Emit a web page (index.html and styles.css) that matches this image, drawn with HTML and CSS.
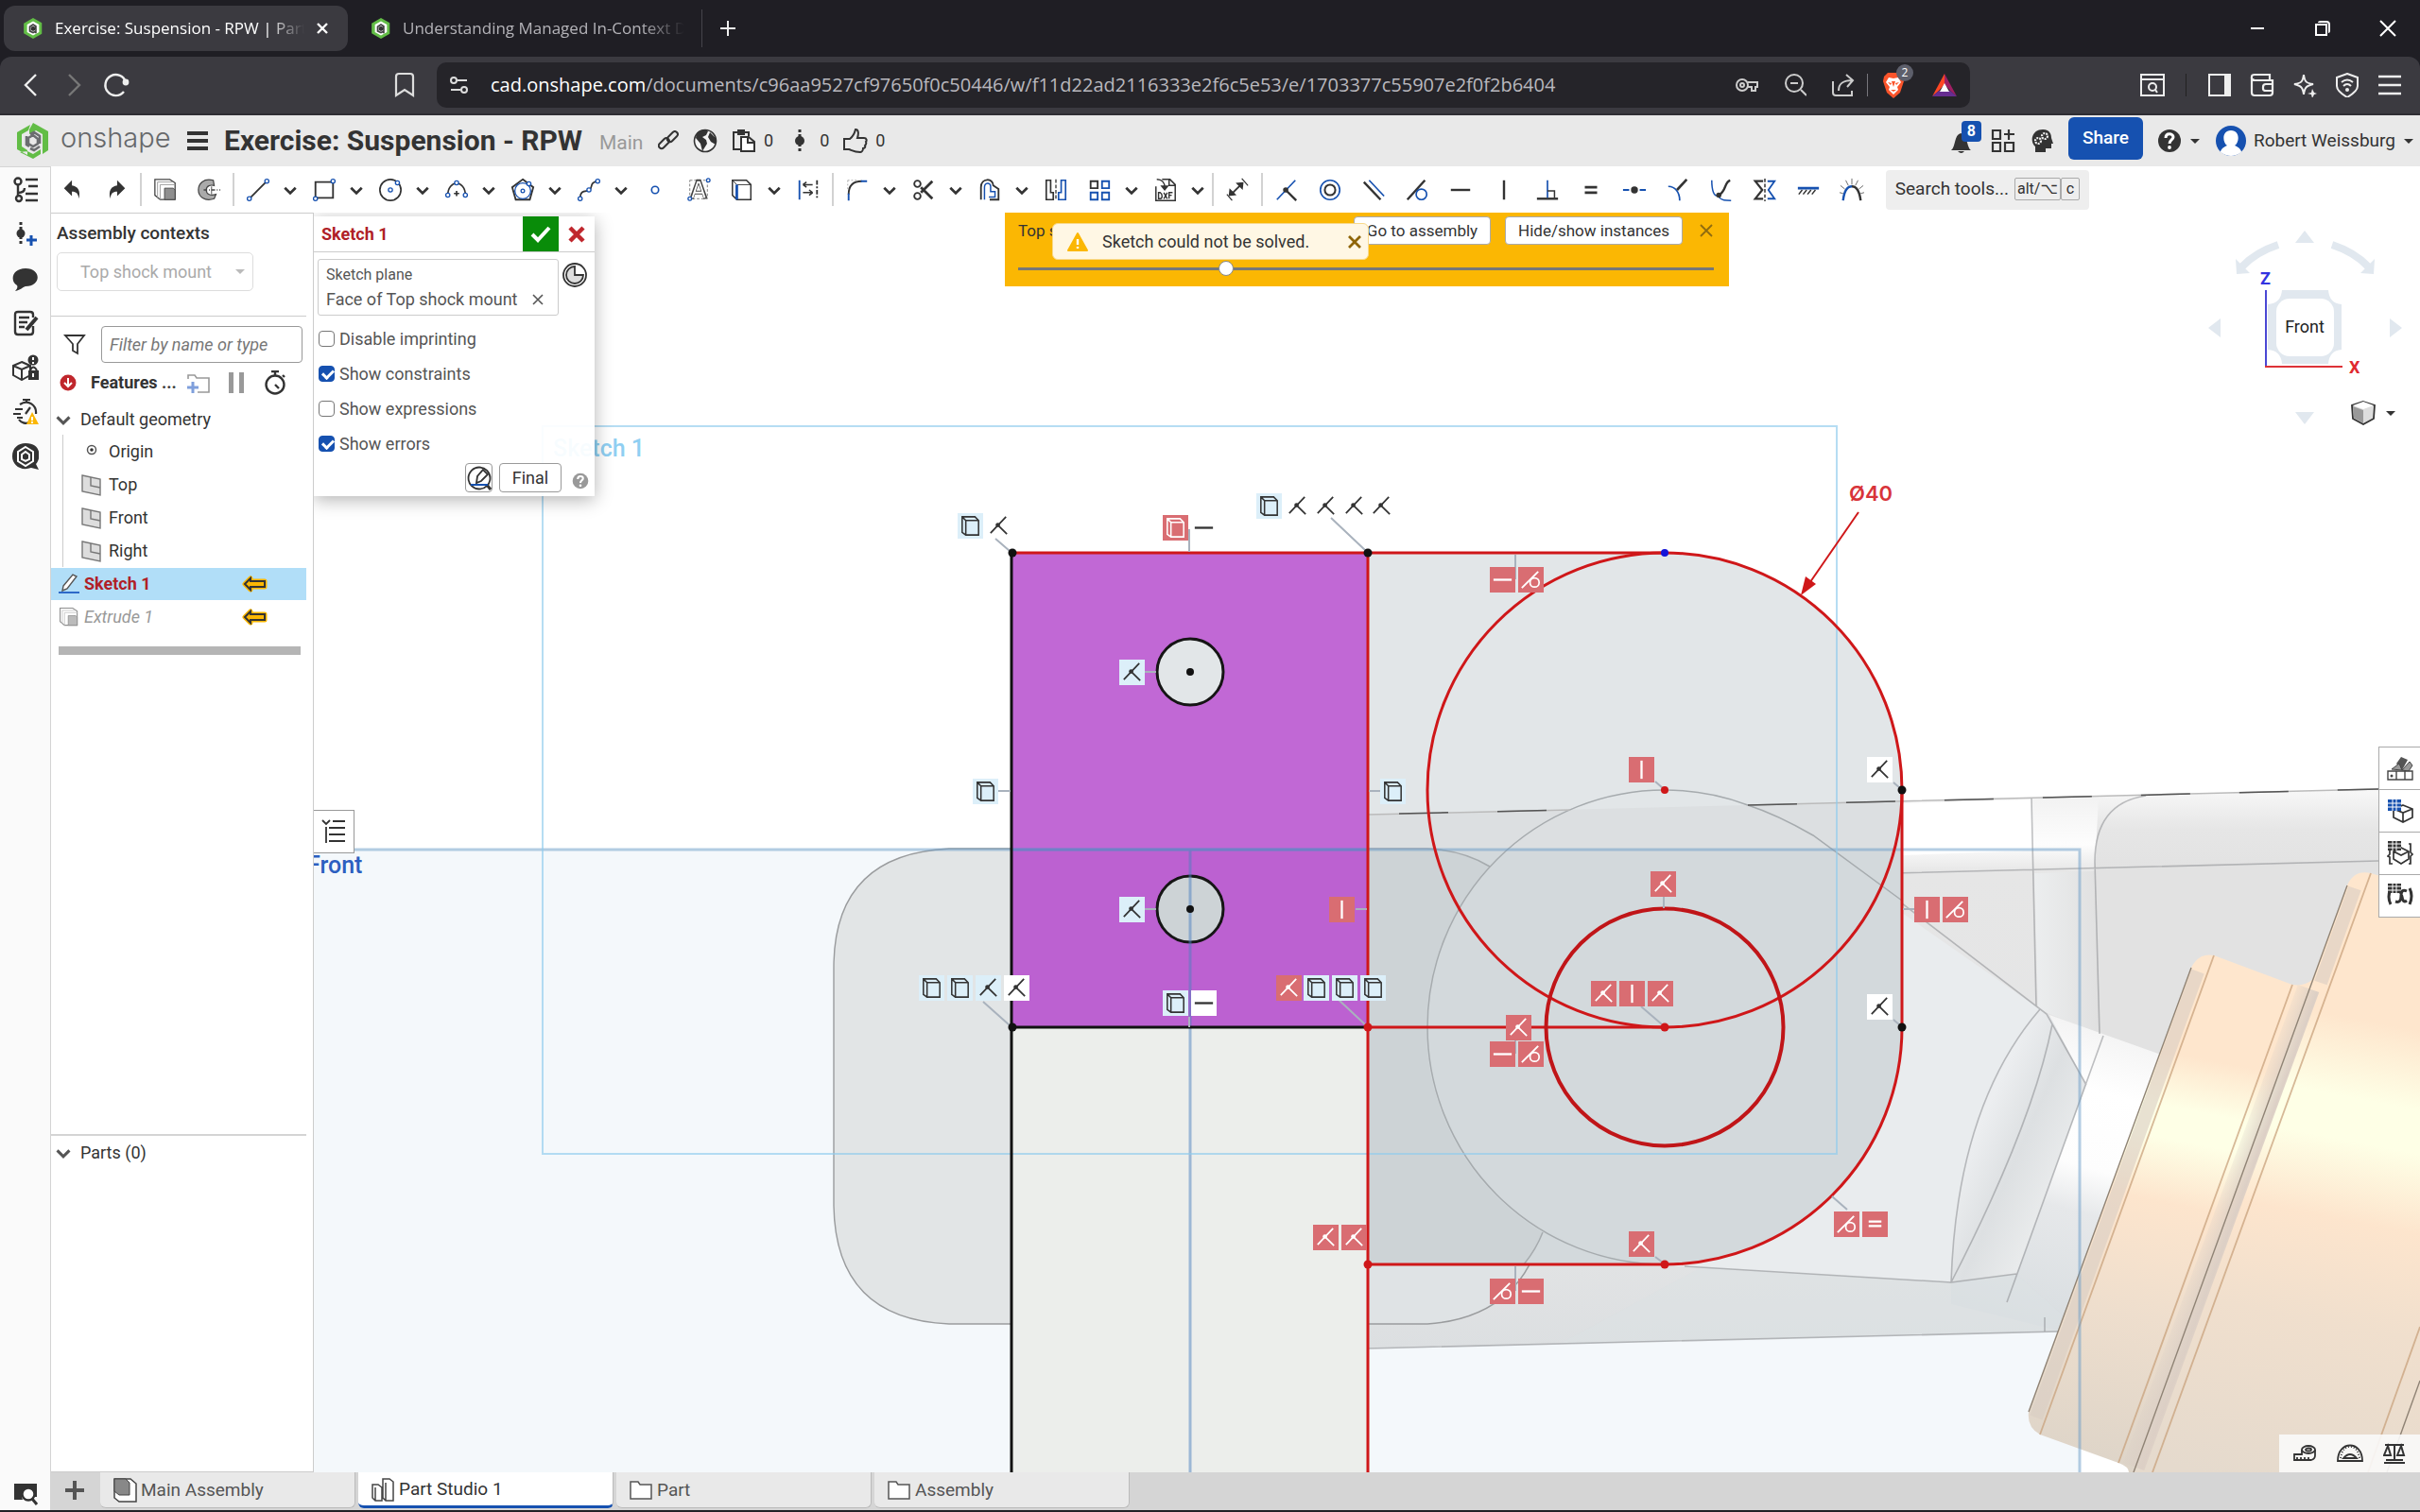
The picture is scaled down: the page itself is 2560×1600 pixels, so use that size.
FILE: index.html
```html
<!DOCTYPE html>
<html lang="en">
<head>
<meta charset="utf-8">
<title>Exercise: Suspension - RPW | Part Studio 1</title>
<link rel="stylesheet" href="styles.css">
</head>
<body>
<svg class="sprite" aria-hidden="true">
<defs>
<linearGradient id="g-steel" x1="0" y1="0" x2="0" y2="1"><stop offset="0" stop-color="#f0f0f0"/><stop offset=".1" stop-color="#fdfdfd"/><stop offset=".15" stop-color="#e6e6e6"/><stop offset=".8" stop-color="#e3e4e5"/><stop offset="1" stop-color="#dcdfe1"/></linearGradient>
<linearGradient id="g-arm" x1="0" y1="0" x2="0" y2="1"><stop offset="0" stop-color="#f8f8f8"/><stop offset=".5" stop-color="#e6e6e6"/><stop offset="1" stop-color="#e2e2e2"/></linearGradient>
<linearGradient id="g-neck" gradientUnits="userSpaceOnUse" x1="2225" y1="1090" x2="2140" y2="1400"><stop offset="0" stop-color="#f4f4f4"/><stop offset=".2" stop-color="#fff"/><stop offset=".45" stop-color="#fdfdfd"/><stop offset=".6" stop-color="#e6e8ea"/><stop offset="1" stop-color="#d8dde0"/></linearGradient>
<linearGradient id="g-fillet" gradientUnits="userSpaceOnUse" x1="2090" y1="1200" x2="2180" y2="1240"><stop offset="0" stop-color="#eceef0"/><stop offset=".5" stop-color="#dde0e2"/><stop offset="1" stop-color="#e9ebec"/></linearGradient>
<linearGradient id="g-coil" gradientUnits="userSpaceOnUse" x1="2470" y1="930" x2="2350" y2="1560"><stop offset="0" stop-color="#fee6cd"/><stop offset=".22" stop-color="#fee6cd"/><stop offset=".35" stop-color="#feffe6"/><stop offset=".42" stop-color="#feffe6"/><stop offset=".55" stop-color="#fde5cd"/><stop offset=".72" stop-color="#f0dfcd"/><stop offset="1" stop-color="#e5dacd"/></linearGradient>
<linearGradient id="g-coil-s" gradientUnits="userSpaceOnUse" x1="2350" y1="1010" x2="2240" y2="1560"><stop offset="0" stop-color="#fee6cd"/><stop offset=".2" stop-color="#fee6cd"/><stop offset=".3" stop-color="#feffe6"/><stop offset=".36" stop-color="#feffe6"/><stop offset=".48" stop-color="#fde5cd"/><stop offset=".7" stop-color="#eedecd"/><stop offset="1" stop-color="#ddd4c8"/></linearGradient>
<linearGradient id="g-shade" gradientUnits="userSpaceOnUse" x1="2334" y1="1287" x2="2372" y2="1301"><stop offset="0" stop-color="#d9cfc6" stop-opacity="0"/><stop offset=".7" stop-color="#dccfc5"/><stop offset="1" stop-color="#dccfc5" stop-opacity=".3"/></linearGradient>
<linearGradient id="g-wall" x1="0" y1="0" x2="1" y2="0"><stop offset="0" stop-color="#eceeef"/><stop offset="1" stop-color="#e0e0e0"/></linearGradient>
</defs>

<symbol id="os-logo" viewBox="0 0 34 38"><path fill="#62bd46" d="M17 0 33 9v20l-6 4V12L20 8l-7 4V7zM0 10l14-8-2 6-7 4v13l6 4v5L0 28zM3 31l14 7 8-5v-5l-8 5-6-3z"/><path fill="none" stroke="#6b6d70" stroke-width="2.6" d="M24 22v-8l-6-4-4 2M10 14v9l3 2m11 0-6 4-4-2M22 17v5l-5 3-5-3v-6l5-3z"/></symbol>
<symbol id="fav" viewBox="0 0 34 38"><path fill="#62bd46" d="M17 0 33 9v20l-16 9L0 28V10z"/><path fill="#fff" d="M17 6 28 12v14l-11 6-11-6V12z"/><path fill="none" stroke="#444" stroke-width="3" d="M22 28v-4l-5 3-6-3v-8l6-4 5 3v7"/><path fill="#333" d="m17 15 4 2v5l-4 2-4-2v-5z"/></symbol>
<symbol id="chev" viewBox="0 0 14 14"><path d="m2 5 5 5 5-5" fill="none" stroke="currentColor" stroke-width="2.4"/></symbol>
<symbol id="caret" viewBox="0 0 14 14"><path d="M2 5h10l-5 5z" fill="currentColor"/></symbol>

<symbol id="undo" viewBox="0 0 28 28"><path fill="currentColor" d="M4 12 13 3v6c7 1 10 6 8 15-1-6-3-8-8-8v5z"/></symbol>
<symbol id="redo" viewBox="0 0 28 28"><path fill="currentColor" d="M24 12 15 3v6c-7 1-10 6-8 15 1-6 3-8 8-8v5z"/></symbol>
<symbol id="extrude" viewBox="0 0 28 28"><path fill="#fff" stroke="#444" stroke-width="1.4" d="M2 2h17l6 4v19H8L2 20z"/><path fill="none" stroke="#999" d="M5 23V5h17M8 25V8h17"/><path fill="#8f8f8f" stroke="#444" d="M13 12h10l2 2v11H13z"/></symbol>
<symbol id="revolve" viewBox="0 0 28 28"><path fill="#aaa" stroke="#444" stroke-width="1.3" d="M19 3C8 0 2 7 2 14s7 14 18 10l2-5c-6 2-11 0-11-5s5-6 9-5z"/><path stroke="#444" stroke-width="1.6" stroke-dasharray="4 2 1 2" d="M8 14h19"/><path fill="none" stroke="#444" d="M17 10v9"/></symbol>
<symbol id="line" viewBox="0 0 28 28"><path stroke="currentColor" stroke-width="2" d="M5 23 23 5"/><g fill="#fff" stroke="#1651b0" stroke-width="1.4"><circle cx="4" cy="24" r="2.3"/><circle cx="24" cy="4" r="2.3"/></g></symbol>
<symbol id="rect" viewBox="0 0 28 28"><path fill="none" stroke="currentColor" stroke-width="2" d="M4 5h20v18H4z"/><g fill="#fff" stroke="#1651b0" stroke-width="1.4"><circle cx="4" cy="24" r="2.3"/><circle cx="24" cy="4" r="2.3"/></g></symbol>
<symbol id="circ" viewBox="0 0 28 28"><circle cx="14" cy="14" r="12" fill="none" stroke="currentColor" stroke-width="1.8"/><g fill="#fff" stroke="#1651b0" stroke-width="1.4"><circle cx="14" cy="14" r="2.3"/><circle cx="22" cy="6" r="2.3"/></g></symbol>
<symbol id="arc" viewBox="0 0 28 28"><path fill="none" stroke="currentColor" stroke-width="1.8" d="M4 20C4 2 24 2 24 20M11 18h6M14 15v6"/><g fill="#fff" stroke="#1651b0" stroke-width="1.4"><circle cx="4" cy="20" r="2.3"/><circle cx="24" cy="20" r="2.3"/><circle cx="14" cy="6" r="2.3"/></g></symbol>
<symbol id="poly" viewBox="0 0 28 28"><path fill="none" stroke="currentColor" stroke-width="2" d="M14 2 26 11 22 25H6L2 11z"/><circle cx="14" cy="15" r="9" fill="none" stroke="#1651b0" stroke-width="1.4"/><g fill="#fff" stroke="#1651b0" stroke-width="1.4"><circle cx="14" cy="15" r="2"/><circle cx="21" cy="7" r="2.3"/></g></symbol>
<symbol id="spline" viewBox="0 0 28 28"><path fill="none" stroke="currentColor" stroke-width="1.8" d="M4 24c0-12 8-7 11-10s0-9 9-10"/><g fill="#fff" stroke="#1651b0" stroke-width="1.4"><circle cx="4" cy="24" r="2.3"/><circle cx="14" cy="14" r="2.3"/><circle cx="24" cy="4" r="2.3"/></g></symbol>
<symbol id="point" viewBox="0 0 28 28"><circle cx="14" cy="14" r="4" fill="none" stroke="#1651b0" stroke-width="1.8"/></symbol>
<symbol id="text" viewBox="0 0 28 28"><path fill="none" stroke="#777" stroke-dasharray="3 2" d="M4 3h20v21H4z"/><path fill="none" stroke="#444" stroke-width="4.4" d="m6 24 7-20h2l7 20M9 17h10"/><path fill="none" stroke="#fff" stroke-width="2" d="m7 23 6-18h2l6 18M9 17h10"/><g fill="#fff" stroke="#1651b0" stroke-width="1.4"><circle cx="4" cy="24" r="2"/><circle cx="25" cy="3" r="2"/></g></symbol>
<symbol id="use" viewBox="0 0 28 28"><path fill="#fff" stroke="currentColor" stroke-width="1.6" d="M3 3h16l5 5v17H8l-5-5z"/><path fill="none" stroke="currentColor" d="M8 8h16M3 3l5 5"/><path stroke="#1651b0" stroke-width="3" d="M8 8v17"/></symbol>
<symbol id="lineardim" viewBox="0 0 28 28"><path stroke="#1651b0" stroke-width="2" d="M4 3v22"/><path fill="none" stroke="currentColor" stroke-width="1.6" d="M8 8h11m-11 0 4-3m-4 3 4 3m7 6H8m11 0-4-3m4 3-4 3"/><path stroke="currentColor" stroke-width="2" stroke-dasharray="5 2 2 2" d="M24 3v22"/></symbol>
<symbol id="fillet" viewBox="0 0 28 28"><path fill="none" stroke="#aaa" stroke-dasharray="2 2" d="M3 3h12M3 3v12"/><path fill="none" stroke="currentColor" stroke-width="2" d="M4 19C4 9 9 4 19 4"/><path stroke="#1651b0" stroke-width="2" d="M4 18v8M18 4h7"/></symbol>
<symbol id="trim" viewBox="0 0 28 28"><path fill="none" stroke="currentColor" stroke-width="3" d="m24 4-13 13M24 24 11 11"/><g fill="none" stroke="currentColor" stroke-width="2"><circle cx="7" cy="7" r="3.6"/><circle cx="7" cy="21" r="3.6"/></g></symbol>
<symbol id="offset" viewBox="0 0 28 28"><path fill="none" stroke="currentColor" stroke-width="2" d="M4 25V11C4 0 18 0 18 9l6 4v12H14"/><path fill="none" stroke="#1651b0" stroke-width="1.6" d="M8 25V11c0-6 7-6 7-1v6h5v6h-7"/></symbol>
<symbol id="mirror" viewBox="0 0 28 28"><path fill="none" stroke="currentColor" stroke-width="1.8" d="M3 3h5v14h3v8H3z"/><path fill="none" stroke="#1651b0" stroke-width="1.8" d="M25 3h-5v14h-3v8h8z"/><path stroke="currentColor" stroke-width="1.4" stroke-dasharray="4 2" d="M14 2v24"/></symbol>
<symbol id="pattern" viewBox="0 0 28 28"><g fill="none" stroke="#1651b0" stroke-width="2"><path stroke="currentColor" d="M4 4h8v8H4z"/><path d="M17 4h8v8h-8zM4 17h8v8H4zM17 17h8v8h-8z"/></g></symbol>
<symbol id="dxf" viewBox="0 0 28 28"><path fill="none" stroke="currentColor" stroke-width="1.6" d="M3 10v16h22V8l-6-6H10M18 2v7h7M4 2c6 0 9 4 9 9"/><path fill="currentColor" d="M8 9h10l-5 6z"/><path fill="none" stroke="currentColor" stroke-width="1.5" d="M6 17v7h2q2 0 2-3t-2-4zM12 17l4 7m0-7-4 7m6 0v-7h4m-4 3h3"/></symbol>
<symbol id="dim" viewBox="0 0 28 28"><path stroke="currentColor" stroke-width="2" d="m8 18 9-9"/><path fill="currentColor" d="m4 21 1-9 8 8zM21 5l-1 9-8-8z"/><path stroke="currentColor" stroke-width="1.3" d="m2 19 6 7M19 1l7 8"/></symbol>
<symbol id="coin" viewBox="0 0 28 28"><path stroke="#1651b0" stroke-width="1.8" d="M3 25 24 3"/><path stroke="currentColor" stroke-width="2.6" d="m13 14 12 12"/><circle cx="13" cy="14" r="3" fill="currentColor"/></symbol>
<symbol id="conc" viewBox="0 0 28 28"><circle cx="14" cy="14" r="11" fill="none" stroke="#1651b0" stroke-width="1.8"/><circle cx="14" cy="14" r="6" fill="none" stroke="currentColor" stroke-width="2.2"/></symbol>
<symbol id="para" viewBox="0 0 28 28"><path stroke="currentColor" stroke-width="2.6" d="m3 5 19 20"/><path stroke="#1651b0" stroke-width="1.8" d="m9 3 17 18"/></symbol>
<symbol id="tang" viewBox="0 0 28 28"><path stroke="currentColor" stroke-width="2.6" d="M3 25 23 3"/><circle cx="19" cy="19" r="6" fill="none" stroke="#1651b0" stroke-width="1.8"/></symbol>
<symbol id="horz" viewBox="0 0 28 28"><path stroke="currentColor" stroke-width="2.6" d="M3 14h22"/></symbol>
<symbol id="vert" viewBox="0 0 28 28"><path stroke="currentColor" stroke-width="2.6" d="M14 3v22"/></symbol>
<symbol id="perp" viewBox="0 0 28 28"><path stroke="currentColor" stroke-width="2.6" d="M2 24h24"/><path fill="none" stroke="#1651b0" stroke-width="1.8" d="M14 3v20"/><path fill="none" stroke="currentColor" stroke-width="1.6" d="M14 15h8v8"/></symbol>
<symbol id="equal" viewBox="0 0 28 28"><path stroke="currentColor" stroke-width="3" d="M7 11h14M7 17h14"/></symbol>
<symbol id="mid" viewBox="0 0 28 28"><path stroke="#1651b0" stroke-width="2" d="M1 14h7m12 0h7"/><circle cx="14" cy="14" r="4" fill="currentColor"/></symbol>
<symbol id="normal" viewBox="0 0 28 28"><path fill="none" stroke="#1651b0" stroke-width="1.8" d="M3 10c8 0 13 7 13 16"/><path stroke="currentColor" stroke-width="2.8" d="M13 14 24 2"/></symbol>
<symbol id="pierce" viewBox="0 0 28 28"><path fill="none" stroke="#1651b0" stroke-width="1.6" d="M3 3c0 10 2 20 8 17M11 22c3 4 8 4 14 4"/><path fill="none" stroke="currentColor" stroke-width="2.6" d="M11 20C20 15 17 5 24 3"/><circle cx="11" cy="20" r="3" fill="currentColor"/></symbol>
<symbol id="sym" viewBox="0 0 28 28"><path fill="none" stroke="currentColor" stroke-width="2.4" d="M12 4H3l8 10-8 10h9"/><path fill="none" stroke="#1651b0" stroke-width="2" d="M17 4h8l-7 10 7 10h-8"/><path stroke="currentColor" stroke-width="1.6" stroke-dasharray="4 2" d="M14 1v26"/></symbol>
<symbol id="fix" viewBox="0 0 28 28"><path stroke="#1651b0" stroke-width="3" d="M2 12h24"/><path stroke="currentColor" stroke-width="1.6" d="m3 19 4-5m1 5 4-5m1 5 4-5m1 5 4-5"/></symbol>
<symbol id="curv" viewBox="0 0 28 28"><path fill="none" stroke="currentColor" stroke-width="2.6" d="M14 10c7 0 9 8 10 16"/><path fill="none" stroke="#1651b0" stroke-width="2.6" d="M4 26C5 17 8 10 14 10"/><path stroke="#666" d="M14 8V1m4 8 3-6m1 10 5-4m-3 9 4-1M10 9 7 3m-1 10L1 9m3 9-4-1"/></symbol>

<symbol id="c-cube" viewBox="0 0 28 28"><path fill="none" stroke="currentColor" stroke-width="1.6" d="M5 4h14l4 4v16H9l-4-3zM9 8v16M5 4l4 4h14"/></symbol>
<symbol id="c-coin" viewBox="0 0 28 28"><path fill="none" stroke="currentColor" stroke-width="1.8" d="M5 22 22 4M13 13l10 10"/><circle cx="13" cy="13" r="2.4" fill="currentColor"/></symbol>
<symbol id="c-horz" viewBox="0 0 28 28"><path stroke="currentColor" stroke-width="2.4" d="M4 14h20"/></symbol>
<symbol id="c-vert" viewBox="0 0 28 28"><path stroke="currentColor" stroke-width="2.4" d="M14 4v20"/></symbol>
<symbol id="c-tang" viewBox="0 0 28 28"><path stroke="currentColor" stroke-width="2" d="M4 23 22 5"/><circle cx="18" cy="17" r="5" fill="none" stroke="currentColor" stroke-width="1.8"/></symbol>
<symbol id="c-eq" viewBox="0 0 28 28"><path stroke="currentColor" stroke-width="2.2" d="M7 11h14M7 16h14"/></symbol>

<symbol id="folder" viewBox="0 0 26 26"><path fill="#fff" stroke="#555" stroke-width="1.5" d="M2 4h8l2 3h12v15H2z"/></symbol>
<symbol id="plane" viewBox="0 0 24 24"><path fill="#ddd" stroke="#777" stroke-width="1.4" d="m2 2 19 4v17L2 19z"/><path fill="none" stroke="#777" stroke-width="1.4" d="M11 4v9l10 2"/></symbol>
<symbol id="arrow-left" viewBox="0 0 28 20"><path fill="#fbb703" stroke="#fbb703" stroke-width="5" stroke-linejoin="round" d="m3 10 6-6v3h15v6H9v3z"/><path fill="#fbb703" stroke="#333" stroke-width="2" d="m3 10 6-6v3h15v6H9v3z"/></symbol>
<symbol id="question" viewBox="0 0 26 26"><circle cx="13" cy="13" r="12" fill="currentColor"/><path fill="none" stroke="#fff" stroke-width="3" d="M9 10c0-6 8-5 8-1 0 3-4 3-4 7"/><circle cx="13" cy="20" r="1.9" fill="#fff"/></symbol>
</svg>

<div class="browser">
  <nav class="tabstrip" aria-label="Browser tabs">
    <a class="btab on" href="#"><svg class="i22"><use href="#fav"/></svg><span class="btitle">Exercise: Suspension - RPW | Part Studio 1</span><svg class="i14" viewBox="0 0 14 14"><path stroke="#fff" stroke-width="2.4" d="m2 2 10 10M12 2 2 12"/></svg></a>
    <a class="btab" href="#"><svg class="i22"><use href="#fav"/></svg><span class="btitle wide">Understanding Managed In-Context Design</span></a>
    <button class="newtab" aria-label="New tab"><svg class="i18" viewBox="0 0 18 18"><path stroke="#eee" stroke-width="2" d="M9 1v16M1 9h16"/></svg></button>
    <div class="wincontrols">
      <button aria-label="Minimize"><svg class="i18" viewBox="0 0 18 18"><path stroke="#fff" stroke-width="2" d="M2 9h14"/></svg></button>
      <button aria-label="Restore"><svg class="i18" viewBox="0 0 18 18"><path fill="none" stroke="#fff" stroke-width="2" d="M2 5h11v11H2zM5 3q0-1 2-1h6q3 0 3 3v6q0 2-1 2"/></svg></button>
      <button aria-label="Close"><svg class="i18" viewBox="0 0 18 18"><path stroke="#fff" stroke-width="2" d="m1 1 16 16M17 1 1 17"/></svg></button>
    </div>
  </nav>
  <div class="addressrow">
    <div class="navbtns">
      <button aria-label="Back"><svg class="i28" viewBox="0 0 28 28"><path fill="none" stroke="#eee" stroke-width="2.4" d="M19 3 8 14l11 11"/></svg></button>
      <button aria-label="Forward"><svg class="i28" viewBox="0 0 28 28"><path fill="none" stroke="#777" stroke-width="2.4" d="m9 3 11 11L9 25"/></svg></button>
      <button aria-label="Reload"><svg class="i28" viewBox="0 0 28 28"><path fill="none" stroke="#eee" stroke-width="2.4" d="M22 21a11 11 0 1 1 2-10"/><circle cx="24" cy="11" r="3.4" fill="#eee"/></svg></button>
    </div>
    <button class="bookmark" aria-label="Bookmark"><svg class="i28" viewBox="0 0 28 28"><path fill="none" stroke="#ddd" stroke-width="2.2" d="M5 25V5q0-3 3-3h12q3 0 3 3v20l-9-6z"/></svg></button>
    <div class="urlbar">
      <svg class="i20" viewBox="0 0 20 20"><g fill="none" stroke="#ddd" stroke-width="2"><circle cx="4" cy="5" r="3"/><circle cx="15" cy="15" r="3"/><path d="M8 5h10M1 15h10"/></g></svg>
      <span class="url"><b>cad.onshape.com</b>/documents/c96aa9527cf97650f0c50446/w/f11d22ad2116333e2f6c5e53/e/1703377c55907e2f0f2b6404</span>
      <svg class="i24" viewBox="0 0 24 24"><g fill="none" stroke="#ccc" stroke-width="2"><circle cx="7" cy="12" r="6"/><circle cx="7" cy="12" r="2"/><path d="M13 9h10v5h-2v4h-4v-4h-4"/></g></svg>
      <svg class="i24" viewBox="0 0 24 24"><g fill="none" stroke="#ccc" stroke-width="2"><circle cx="11" cy="10" r="9"/><path d="m18 17 6 6M7 10h8"/></g></svg>
      <svg class="i24" viewBox="0 0 24 24"><path fill="none" stroke="#ccc" stroke-width="2" d="M1 8v12q0 3 3 3h17v-5M7 18c0-8 5-11 15-11m-7-6 7 6-6 7"/></svg>
      <i class="vsep"></i>
      <span class="brave"><svg class="i28" viewBox="0 0 28 28"><path fill="#fb542b" d="M8 1h12l4 4 1 5-4 12-7 6-7-6L3 10l1-5z"/><path fill="#fff" d="m9 6 5 1 5-1 3 5-4 5 1 3-5 5-5-5 1-3-4-5z"/><path fill="#fb542b" d="m12 10 2 6 2-6zM8 11l4 1-1 2zm12 0-4 1 1 2zM11 19h6l-3 2z"/></svg><em>2</em></span>
      <svg class="i26" viewBox="0 0 26 24"><path fill="#ff4724" d="M13 0v11L7 18l-7 6z"/><path fill="#9e1f63" d="m13 0 13 24-7-6-6-7z"/><path fill="#662d91" d="m0 24 7-6h12l7 6z"/><path fill="#fff" d="m13 10 5 9H8z"/></svg>
    </div>
    <div class="exts">
      <svg class="i26" viewBox="0 0 26 26"><g fill="none" stroke="#eee" stroke-width="2"><path d="M1 2h24v22H1zM1 7h24"/><circle cx="13" cy="15" r="4"/><path d="m16 18 2 3"/></g></svg>
      <i class="vsep"></i>
      <svg class="i26" viewBox="0 0 26 26"><path fill="none" stroke="#eee" stroke-width="2" d="M2 2h22v22H2z"/><path fill="#eee" d="M18 2h6v22h-6z"/></svg>
      <svg class="i26" viewBox="0 0 26 26"><g fill="none" stroke="#eee" stroke-width="2.2"><path d="M2 6v15q0 3 3 3h16q3 0 3-3V8H5Q1 7 2 4q0-2 3-2h16v5M25 12h-8q-3 0-3 3v2q0 2 3 2h8"/></g></svg>
      <svg class="i26" viewBox="0 0 26 26"><path fill="none" stroke="#eee" stroke-width="2" d="M12 2c1 8 3 9 10 10-7 2-9 3-10 11-1-8-3-9-10-11 7-1 9-2 10-10z"/><path fill="#eee" d="M21 17l2 4 3 1-3 1-2 4-1-4-4-1 4-1z"/></svg>
      <svg class="i26" viewBox="0 0 26 26"><g fill="none" stroke="#eee" stroke-width="2"><path d="M13 1 24 5v9c0 5-6 9-11 12C8 23 2 19 2 14V5zM7 10q6-5 12 0M9 14q4-4 8 0"/></g><circle cx="13" cy="18" r="2" fill="#eee"/></svg>
      <svg class="i26" viewBox="0 0 26 26"><path stroke="#eee" stroke-width="2.4" d="M1 4h24M1 13h24M1 22h24"/></svg>
    </div>
  </div>
</div>

<header class="dochead">
  <svg class="logo"><use href="#os-logo"/></svg>
  <span class="brand">onshape</span>
  <button class="burger" aria-label="Menu"><svg class="i22" viewBox="0 0 22 22"><path stroke="#333" stroke-width="4" d="M0 3h22M0 11h22M0 19h22"/></svg></button>
  <h1>Exercise: Suspension - RPW</h1>
  <span class="branch">Main</span>
  <div class="docstats">
    <button aria-label="Copy link"><svg class="i22" viewBox="0 0 22 22"><g fill="none" stroke="#333" stroke-width="2"><rect x="0" y="11" width="13" height="6" rx="3" transform="rotate(-45 6 14)"/><rect x="9" y="4" width="13" height="6" rx="3" transform="rotate(-45 15 7)"/></g></svg></button>
    <button aria-label="Public"><svg class="i26" viewBox="0 0 26 26"><circle cx="13" cy="13" r="11.500" fill="#f4f4f4" stroke="#333" stroke-width="1.6"/><path fill="#333" d="M4 5c4-5 10-4 12-2l-2 4-4 2 4 3 1 4-5 8-2-8-5-6zM18 4l6 6v7l-5-3-3-5z"/></svg></button>
    <button aria-label="Copies"><svg class="i26" viewBox="0 0 26 26"><path fill="none" stroke="#333" stroke-width="2" d="M9 22H2V4h16v4M7 2h6v4H7z"/><path fill="#fff" stroke="#333" stroke-width="2" d="M10 9h8l6 5v10H10zM17 9v6h7"/></svg>0</button>
    <button aria-label="Versions"><svg class="i26" viewBox="0 0 26 26"><path stroke="#333" stroke-width="3" stroke-dasharray="3 2" d="M13 1v24"/><circle cx="13" cy="13" r="5" fill="#333"/></svg>0</button>
    <button aria-label="Likes"><svg class="i26" viewBox="0 0 26 26"><path fill="none" stroke="#333" stroke-width="2" d="M1 11h6c4-3 5-6 6-10 4 0 3 6 2 9h7c3 0 3 3 2 4 1 2 0 3-1 4 1 2-1 3-2 3 0 3-2 4-3 4-6 0-9-2-12-3H1z"/></svg>0</button>
  </div>
  <div class="headright">
    <button class="bell" aria-label="Notifications"><svg class="i28" viewBox="0 0 28 28"><path fill="#333" d="M1 24c5-4 3-16 10-18 8 2 6 14 11 18zM8 25h7q-3 4-7 0z"/></svg><em>8</em></button>
    <button aria-label="Apps"><svg class="i26" viewBox="0 0 26 26"><path fill="none" stroke="#333" stroke-width="2.2" d="M2 2h8v9H2zM2 15h8v9H2zM15 15h9v9h-9zM19 1v11M14 6h11"/></svg></button>
    <button aria-label="Learning"><svg class="i26" viewBox="0 0 26 26"><path fill="#333" d="M6 25v-6C0 14 2 1 14 1c8 0 9 6 9 9l2 6h-2v5h-6v4z"/><g fill="none" stroke="#eee" stroke-width="2.2" stroke-dasharray="2 1"><circle cx="9" cy="13" r="3"/><circle cx="16" cy="8" r="3"/></g></svg></button>
    <button class="share">Share</button>
    <button aria-label="Help"><svg class="i26 dark"><use href="#question"/></svg></button>
    <svg class="i14 dark"><use href="#caret"/></svg>
    <button class="user"><svg class="i32" viewBox="0 0 32 32"><circle cx="16" cy="16" r="16" fill="#1651b0"/><path fill="#fff" d="M16 5c10 0 9 13 4 16 5 2 7 5 7 7q-11 8-22 0c0-2 2-5 7-7C7 18 6 5 16 5z"/></svg>Robert Weissburg</button>
    <svg class="i14 dark"><use href="#caret"/></svg>
  </div>
</header>

<div class="app">
  <aside class="strip">
    <button aria-label="Feature list"><svg class="i28" viewBox="0 0 28 28"><g fill="none" stroke="currentColor" stroke-width="2.4"><circle cx="6" cy="5" r="3.500"/><path d="M6 9v11M6 17c4 0 7-1 7-5M14 3h13M17 10h10M14 18h13M14 25h13"/><circle cx="7" cy="23" r="3"/></g></svg></button>
    <button aria-label="Insert"><svg class="i28" viewBox="0 0 28 28"><path stroke="currentColor" stroke-width="3" stroke-dasharray="3 2" d="M9 1v25"/><circle cx="9" cy="13" r="4.500" fill="currentColor"/><path stroke="#1651b0" stroke-width="3" d="M20 15v11M15 20h11"/></svg></button>
    <button aria-label="Comments"><svg class="i28" viewBox="0 0 28 28"><path fill="currentColor" d="M14 3c17 0 17 19 0 19-2 0-5 4-11 5 2-2 3-4 2-6C-3 16 0 3 14 3z"/></svg></button>
    <button aria-label="Notes"><svg class="i28" viewBox="0 0 28 28"><path fill="none" stroke="currentColor" stroke-width="2.400" d="M22 17v6q0 3-3 3H6q-3 0-3-3V5q0-3 3-3h13q3 0 3 3v3M7 8h11M7 13h9M7 18h6"/><path stroke="currentColor" stroke-width="4" d="M26 8 15 21"/></svg></button>
    <button aria-label="Missing references"><svg class="i28" viewBox="0 0 28 28"><path fill="none" stroke="currentColor" stroke-width="2" d="m10 8 9 4v10l-9 5-9-5V12zM1 12l9 4 9-4M10 16v11"/><circle cx="22" cy="6" r="5.500" fill="currentColor"/><path fill="currentColor" d="M17 17h11v10H17z"/><path fill="none" stroke="currentColor" stroke-width="2" d="M19 17q3-7 7 0"/><path stroke="#fff" stroke-width="2" d="M22 3v3M22 8v2M22 20v4"/></svg></button>
    <button aria-label="Performance"><svg class="i28" viewBox="0 0 28 28"><g fill="none" stroke="currentColor" stroke-width="2.200"><path d="M8 6c9-6 18 1 17 10M7 22c2 3 7 5 11 3M11 1h8M15 1v3M1 16h8M3 11h8M5 20h6M14 16l5-7"/></g><path fill="#fbb703" d="m21 14 7 13H15z"/><path stroke="#fff" stroke-width="2" d="M21 19v4M21 24v2"/></svg></button>
    <button aria-label="Search"><svg class="i28" viewBox="0 0 28 28"><path fill="currentColor" d="M14 0c18 0 16 17 11 22l3 6-8-2C9 30 0 23 0 14S6 0 14 0z"/><g fill="none" stroke="#fff" stroke-width="2"><path d="m14 4 8 5v10l-8 5-8-5V9z"/><path d="m14 9 4 3v5l-4 2-4-2v-5z"/></g></svg></button>
    <button class="last" aria-label="Tab manager"><svg class="i28" viewBox="0 0 28 28"><path fill="currentColor" d="M2 4h24v14h-4a6 6 0 1 0-11 3H2z"/><circle cx="17" cy="15" r="6.500" fill="#fff" stroke="currentColor" stroke-width="2.400"/><path stroke="currentColor" stroke-width="3" d="m21 20 5 6"/></svg></button>
  </aside>

  <div class="studio">
    <div class="toolbar" role="toolbar" aria-label="Sketch tools">
      <button aria-label="Undo"><svg><use href="#undo"/></svg></button><button aria-label="Redo"><svg><use href="#redo"/></svg></button><i></i>
      <button aria-label="Extrude"><svg><use href="#extrude"/></svg></button><button aria-label="Revolve"><svg><use href="#revolve"/></svg></button><i></i>
      <button aria-label="Line"><svg><use href="#line"/></svg></button><button class="drop" aria-label="Line options"><svg><use href="#chev"/></svg></button>
      <button aria-label="Rectangle"><svg><use href="#rect"/></svg></button><button class="drop" aria-label="Rectangle options"><svg><use href="#chev"/></svg></button>
      <button aria-label="Circle"><svg><use href="#circ"/></svg></button><button class="drop" aria-label="Circle options"><svg><use href="#chev"/></svg></button>
      <button aria-label="Arc"><svg><use href="#arc"/></svg></button><button class="drop" aria-label="Arc options"><svg><use href="#chev"/></svg></button>
      <button aria-label="Polygon"><svg><use href="#poly"/></svg></button><button class="drop" aria-label="Polygon options"><svg><use href="#chev"/></svg></button>
      <button aria-label="Spline"><svg><use href="#spline"/></svg></button><button class="drop" aria-label="Spline options"><svg><use href="#chev"/></svg></button>
      <button aria-label="Point"><svg><use href="#point"/></svg></button><button aria-label="Text"><svg><use href="#text"/></svg></button>
      <button aria-label="Use"><svg><use href="#use"/></svg></button><button class="drop" aria-label="Use options"><svg><use href="#chev"/></svg></button>
      <button aria-label="Construction"><svg><use href="#lineardim"/></svg></button><i></i>
      <button aria-label="Fillet"><svg><use href="#fillet"/></svg></button><button class="drop" aria-label="Fillet options"><svg><use href="#chev"/></svg></button>
      <button aria-label="Trim"><svg><use href="#trim"/></svg></button><button class="drop" aria-label="Trim options"><svg><use href="#chev"/></svg></button>
      <button aria-label="Offset"><svg><use href="#offset"/></svg></button><button class="drop" aria-label="Offset options"><svg><use href="#chev"/></svg></button>
      <button aria-label="Mirror"><svg><use href="#mirror"/></svg></button>
      <button aria-label="Pattern"><svg><use href="#pattern"/></svg></button><button class="drop" aria-label="Pattern options"><svg><use href="#chev"/></svg></button>
      <button aria-label="Insert DXF"><svg><use href="#dxf"/></svg></button><button class="drop" aria-label="Insert options"><svg><use href="#chev"/></svg></button><i></i>
      <button aria-label="Dimension"><svg><use href="#dim"/></svg></button><i></i>
      <button aria-label="Coincident"><svg><use href="#coin"/></svg></button><button aria-label="Concentric"><svg><use href="#conc"/></svg></button><button aria-label="Parallel"><svg><use href="#para"/></svg></button><button aria-label="Tangent"><svg><use href="#tang"/></svg></button><button aria-label="Horizontal"><svg><use href="#horz"/></svg></button><button aria-label="Vertical"><svg><use href="#vert"/></svg></button><button aria-label="Perpendicular"><svg><use href="#perp"/></svg></button><button aria-label="Equal"><svg><use href="#equal"/></svg></button><button aria-label="Midpoint"><svg><use href="#mid"/></svg></button><button aria-label="Normal"><svg><use href="#normal"/></svg></button><button aria-label="Pierce"><svg><use href="#pierce"/></svg></button><button aria-label="Symmetric"><svg><use href="#sym"/></svg></button><button aria-label="Fix"><svg><use href="#fix"/></svg></button><button aria-label="Curvature"><svg><use href="#curv"/></svg></button>
      <button class="searchtools">Search tools...<span class="keys"><kbd>alt/⌥</kbd><kbd>c</kbd></span></button>
    </div>

    <div class="work">
      <section class="tree">
        <div class="contexts">
          <label class="heading" for="ctx">Assembly contexts</label>
          <div class="selwrap"><select id="ctx" disabled><option>Top shock mount</option></select><svg class="i14"><use href="#caret"/></svg></div>
        </div>
        <div class="filter">
          <svg class="i28" viewBox="0 0 28 28"><path fill="none" stroke="#333" stroke-width="1.800" d="M4 4h20l-7 9v10l-5-3v-7z"/></svg>
          <input type="text" aria-label="Filter features" placeholder="Filter by name or type">
        </div>
        <div class="featurehead">
          <svg class="i18" viewBox="0 0 18 18"><circle cx="9" cy="9" r="8.500" fill="#c0272d"/><path fill="none" stroke="#fff" stroke-width="2" d="M9 4v9M5 9l4 4 4-4"/></svg>
          <h2>Features ...</h2>
          <svg class="i26" viewBox="0 0 26 26"><path fill="none" stroke="#999" stroke-width="1.600" d="M3 9V5h7l2 3h13v15H13"/><path stroke="#7f9fdc" stroke-width="3" d="M8 12v12M2 18h12"/></svg>
          <svg class="i26" viewBox="0 0 26 26"><path fill="#999" d="M5 2h5v22H5zM16 2h5v22h-5z"/></svg>
          <svg class="i26" viewBox="0 0 26 26"><g fill="none" stroke="#333" stroke-width="2.400"><circle cx="13" cy="15" r="9.500"/><path d="M9 1h8M13 1v4M13 15l4 4M21 5l2 2"/></g></svg>
        </div>
        <ul class="features">
          <li class="group"><svg class="i18"><use href="#chev"/></svg>Default geometry
          <ul>
            <li><svg class="i24" viewBox="0 0 24 24"><circle cx="12" cy="10" r="4.500" fill="none" stroke="#555" stroke-width="1.500"/><circle cx="12" cy="10" r="1.800" fill="#333"/></svg>Origin</li>
            <li><svg class="i24"><use href="#plane"/></svg>Top</li>
            <li><svg class="i24"><use href="#plane"/></svg>Front</li>
            <li><svg class="i24"><use href="#plane"/></svg>Right</li>
          </ul></li>
          <li class="feat current"><svg class="i22" viewBox="0 0 22 22"><path fill="#fff" stroke="#555" stroke-width="1.400" d="m5 13 10-12 4 2L9 16l-5 2z"/><path stroke="#2e6ac8" stroke-width="2" d="M0 20h22"/></svg><span>Sketch 1</span><svg class="flag"><use href="#arrow-left"/></svg></li>
          <li class="feat dim"><svg class="i22"><use href="#extrude"/></svg><span>Extrude 1</span><svg class="flag"><use href="#arrow-left"/></svg></li>
        </ul>
        <div class="rollback"></div>
        <div class="parts"><svg class="i18"><use href="#chev"/></svg>Parts (0)</div>
      </section>

      <main class="canvas">
        <svg class="scene" viewBox="332 225 2228 1333" preserveAspectRatio="xMinYMin slice">
          <path fill="#f4f8fb" d="M332 899H2200V1558H332z"/>
          <!-- rear arm -->
          <path fill="url(#g-steel)" d="M1447 862 2560 834V1400L1447 1427z"/>
          <path fill="url(#g-arm)" d="M2220 842 2560 834V912l-344 9z"/>
          <path fill="#e2e2e2" d="M2216 920 2560 911V1400H2216z"/>
          <path fill="url(#g-wall)" d="M2152 924l64-2 6 172-66-26z"/>
          <path fill="#fff" d="M2200 1404 2400 1400V1558H2200z"/>
          <path fill="#fff" d="M2012 850 2149 846 2151 900 2012 905z"/>
          <path fill="#e9ecee" d="M1849 852 2168 1075 2064 1357 1782 1340 1447 1340V1087z"/>
          <path fill="url(#g-fillet)" d="M2158 1068Q2070 1170 2064 1357L2133 1348 2220 1148 2171 1078z"/>
          <path fill="url(#g-neck)" d="M2168 1074 2286 1116 2178 1408 2064 1380V1357L2133 1348 2207 1148z"/>
          <path fill="#dce1e3" d="M1800 1341 2064 1357 2133 1348 2180 1390V1409L1650 1422z" opacity=".5"/>
          <g fill="none" stroke="#8b8d8f" stroke-opacity=".55" stroke-width="1.600">
            <path d="M1964 925 2516 911M2149 845 2154 1064M2221 1094 2216 912Q2216 850 2270 842M1849 852Q1880 862 1918 884L2165 1073 2207 1148M2158 1068Q2070 1170 2064 1357M2171 1084Q2150 1190 2064 1357L2133 1348M2225 1096 2123 1378M1782 1340 2064 1357M2163 1394V1409M1447 1427 2177 1409"/>
          </g>
          <!-- coil cover -->
          <path fill="url(#g-coil-s)" d="M2318 1024Q2326 1008 2342 1011L2425 1042Q2438 1044 2447 1036V1558H2252Q2252 1552 2241 1548L2158 1518Q2144 1510 2146 1494z"/>
          <path fill="url(#g-coil)" d="M2447 1034 2483 937Q2490 920 2508 924L2560 940V1558H2257z"/>
          <path fill="none" stroke="url(#g-shade)" stroke-width="24" d="M2442 1046 2257 1552"/>
          <path fill="none" stroke="#d9cdc3" stroke-opacity=".6" stroke-width="14" d="M2325 1028 2154 1500M2491 940 2455 1040"/>
          <g fill="none" stroke="#c8a27c" stroke-opacity=".75" stroke-width="1.800"><path d="M2342 1011 2158 1518M2425 1042 2241 1548M2508 924 2277 1558M2560 1404 2505 1558"/></g>
          <g fill="none" stroke="#8f8375" stroke-width="1.400"><path d="M2318 1024 2146 1494M2483 937 2257 1558M2560 1461 2525 1558"/></g>
          <!-- mount body behind the sketch -->
          <path fill="#e2e5e6" stroke="#9a9c9e" stroke-width="1.400" d="M1070 898H1004Q882 904 882 1024V1276Q884 1396 1004 1401H1070z"/>
          <path fill="#dfe3e5" stroke="#9a9c9e" stroke-width="1.400" d="M1447 1401H1510Q1610 1394 1632 1300L1447 1300z"/>
          <path fill="#eceeeb" d="M1070 1087H1447V1558H1070z"/>
          <!-- sketch region -->
          <path fill="#e2e6e8" d="M1447 585H1761A251 251 0 0 1 2012 836V1087A251 251 0 0 1 1761 1338H1447z"/>
          <path fill="#dcdfe1" d="M1447 862 2012 848V899H1447z"/>
          <path fill="#d3d9dc" d="M1447 899H2012V1087A251 251 0 0 1 1761 1338H1447z"/>
          <path fill="#cdd3d6" d="M1447 899H1510Q1548 900 1576 917A251 251 0 0 0 1632 1304Q1625 1322 1612 1338H1447z"/>
          <path fill="none" stroke="#a6abae" stroke-width="1.500" d="M1849 852A251 251 0 0 0 1761 836 251 251 0 0 0 1510 1087 251 251 0 0 0 1761 1338M1447 898H1510Q1548 900 1576 917M1632 1304Q1625 1322 1612 1338M1849 852Q1880 862 1918 884L2012 953"/>
          <path fill="none" stroke="#bbb" stroke-width="1.500" d="M1447 862 1661 857M1849 852 2516 835"/>
          <path fill="none" stroke="#555" stroke-dasharray="52 52" stroke-width="1.500" d="M1480 861 1661 857M1849 852 2516 835"/>
          <path fill="#c168d5" d="M1070 585H1447V1087H1070z"/>
          <path fill="#bc61d1" d="M1070 899H1447V1087H1070z"/>
          <circle cx="1259" cy="711" r="35" fill="#e2e6e8" stroke="#151515" stroke-width="3"/>
          <circle cx="1259" cy="962" r="35" fill="#cdd3d6" stroke="#151515" stroke-width="3"/>
          <path fill="none" stroke="#6a9cc8" stroke-opacity=".5" stroke-width="3" d="M332 899H2200V1558"/>
          <path fill="none" stroke="#4b7fc0" stroke-opacity=".5" stroke-width="3" d="M1259 899V1558M1070 899H1447"/>
          <path fill="none" stroke="#8fcbec" stroke-opacity=".65" stroke-width="2" d="M574 451H1943V1221H574z"/>
          <text class="plane-label" x="325" y="924" fill="#2c5fc0">Front</text>
          <text class="plane-label" x="585" y="483" fill="#8fcff2">Sketch 1</text>
          <g fill="none" stroke="#cf1719" stroke-width="3">
            <path d="M1070 585H1761M1447 585V1558M2012 836V1087A251 251 0 0 1 1761 1338H1447M1447 1087H1761"/>
            <circle cx="1761" cy="836" r="251"/>
            <circle cx="1761" cy="1087" r="125.500" stroke="#c01518" stroke-width="4"/>
          </g>
          <path fill="none" stroke="#111" stroke-width="3" d="M1070 585V1558M1070 1087H1447"/>
          <path stroke="#cf1719" stroke-width="2" d="M1966 542 1908 626"/>
          <path fill="#cf1719" d="m1905 630 5-20 11 8z"/>
          <text class="dim-label" x="1956" y="530">Ø40</text>
          <g fill="none" stroke="#a9b2bd" stroke-width="2"><path d="M1053 570 1068 583M1258 560V584M1408 548 1445 583M1210 711H1223M1210 962H1223M1056 837H1069M1448 837H1460M1434 962H1446M1040 1060 1068 1085M1414 1056 1445 1085M1258 1076V1087M1603 587V613M1603 1101V1115M1751 827 1759 834M1760 949V961M1736 1065 1758 1084M2003 828 2010 834M2003 1079 2010 1085M2013 962H2025M1938 1266 1954 1280M1751 1330 1759 1336M1603 1340V1366"/></g>
          <g fill="#111"><circle cx="1071" cy="585" r="4.500"/><circle cx="1447" cy="585" r="4.500"/><circle cx="1071" cy="1087" r="4.500"/><circle cx="1259" cy="711" r="4"/><circle cx="1259" cy="962" r="4"/><circle cx="2012" cy="836" r="4.500"/><circle cx="2012" cy="1087" r="4.500"/></g>
          <g fill="#cf1719"><circle cx="1447" cy="1087" r="4.500"/><circle cx="1761" cy="836" r="4"/><circle cx="1761" cy="1087" r="4.500"/><circle cx="1761" cy="1338" r="4.500"/><circle cx="1447" cy="1338" r="4.500"/></g>
          <circle cx="1761" cy="585" r="4" fill="#1414d8"/>
          <!-- constraint badges -->
          <g class="bg-blue"><path d="M1013 543h27v27h-27zM1329 522h27v27h-27zM1184 698h27v27h-27zM1184 949h27v27h-27zM1029 824h27v27h-27zM1460 824h27v27h-27zM972 1032h27v27h-27zM1002 1032h27v27h-27zM1032 1032h27v27h-27zM1230 1048h27v27h-27zM1379 1032h27v27h-27zM1409 1032h27v27h-27zM1439 1032h27v27h-27z"/></g>
          <path fill="#fff" d="M1062 1032h27v27h-27zM1260 1048h27v27h-27zM1975 801h27v27h-27zM1975 1052h27v27h-27zM1043 543h24v24h-24zM1260 545h27v20h-27z"/>
          <g class="bg-red"><path d="M1230 545h27v27h-27zM1406 949h27v27h-27zM1350 1032h27v27h-27zM1576 600h27v27h-27zM1606 600h27v27h-27zM1593 1074h27v27h-27zM1576 1102h27v27h-27zM1606 1102h27v27h-27zM1723 801h27v27h-27zM1746 922h27v27h-27zM1683 1038h27v27h-27zM1713 1038h27v27h-27zM1743 1038h27v27h-27zM2025 949h27v27h-27zM2055 949h27v27h-27zM1940 1282h27v27h-27zM1970 1282h27v27h-27zM1723 1303h27v27h-27zM1576 1353h27v27h-27zM1606 1353h27v27h-27zM1389 1296h27v27h-27zM1419 1296h27v27h-27z"/></g>
          <g class="ink">
            <use href="#c-cube" x="1013" y="543" width="27" height="27"/><use href="#c-coin" x="1043" y="543" width="27" height="27"/>
            <use href="#c-horz" x="1260" y="545" width="27" height="27"/>
            <use href="#c-cube" x="1329" y="522" width="27" height="27"/><use href="#c-coin" x="1359" y="522" width="27" height="27"/><use href="#c-coin" x="1389" y="522" width="27" height="27"/><use href="#c-coin" x="1419" y="522" width="27" height="27"/><use href="#c-coin" x="1448" y="522" width="27" height="27"/>
            <use href="#c-coin" x="1184" y="698" width="27" height="27"/><use href="#c-coin" x="1184" y="949" width="27" height="27"/>
            <use href="#c-cube" x="1029" y="824" width="27" height="27"/><use href="#c-cube" x="1460" y="824" width="27" height="27"/>
            <use href="#c-cube" x="972" y="1032" width="27" height="27"/><use href="#c-cube" x="1002" y="1032" width="27" height="27"/><use href="#c-coin" x="1032" y="1032" width="27" height="27"/><use href="#c-coin" x="1062" y="1032" width="27" height="27"/>
            <use href="#c-cube" x="1230" y="1048" width="27" height="27"/><use href="#c-horz" x="1260" y="1048" width="27" height="27"/>
            <use href="#c-cube" x="1379" y="1032" width="27" height="27"/><use href="#c-cube" x="1409" y="1032" width="27" height="27"/><use href="#c-cube" x="1439" y="1032" width="27" height="27"/>
            <use href="#c-coin" x="1975" y="801" width="27" height="27"/><use href="#c-coin" x="1975" y="1052" width="27" height="27"/>
          </g>
          <g class="ink-white">
            <use href="#c-cube" x="1230" y="545" width="27" height="27"/><use href="#c-vert" x="1406" y="949" width="27" height="27"/><use href="#c-coin" x="1350" y="1032" width="27" height="27"/>
            <use href="#c-horz" x="1576" y="600" width="27" height="27"/><use href="#c-tang" x="1606" y="600" width="27" height="27"/>
            <use href="#c-coin" x="1593" y="1074" width="27" height="27"/><use href="#c-horz" x="1576" y="1102" width="27" height="27"/><use href="#c-tang" x="1606" y="1102" width="27" height="27"/>
            <use href="#c-vert" x="1723" y="801" width="27" height="27"/><use href="#c-coin" x="1746" y="922" width="27" height="27"/>
            <use href="#c-coin" x="1683" y="1038" width="27" height="27"/><use href="#c-vert" x="1713" y="1038" width="27" height="27"/><use href="#c-coin" x="1743" y="1038" width="27" height="27"/>
            <use href="#c-vert" x="2025" y="949" width="27" height="27"/><use href="#c-tang" x="2055" y="949" width="27" height="27"/>
            <use href="#c-tang" x="1940" y="1282" width="27" height="27"/><use href="#c-eq" x="1970" y="1282" width="27" height="27"/>
            <use href="#c-coin" x="1723" y="1303" width="27" height="27"/><use href="#c-tang" x="1576" y="1353" width="27" height="27"/><use href="#c-horz" x="1606" y="1353" width="27" height="27"/>
            <use href="#c-coin" x="1389" y="1296" width="27" height="27"/><use href="#c-coin" x="1419" y="1296" width="27" height="27"/>
          </g>
        </svg>

        <svg class="viewcube" viewBox="2320 240 240 220">
          <g fill="#e1e8ef"><path d="m2440 246 10 13h-20zM2440 451l10-13h-20zM2338 349l13-10v20zM2543 349l-13-10v20z"/><path d="M2416 309h49q1 14 14 15v48q-13 1-14 15h-49q-1-14-15-15v-48q14-1 15-15z"/></g>
          <rect x="2410" y="318" width="61" height="61" rx="14" fill="#fff"/>
          <g fill="none" stroke="#e1e8ef" stroke-width="8"><path d="M2412 261q-24 8-38 23M2469 261q24 8 38 23"/></g>
          <path fill="#e1e8ef" d="m2367 276 1 16 14-1zM2514 276l-1 16-14-1z"/>
          <path stroke="#4a48d4" stroke-width="2" d="M2399 309v82"/><path stroke="#dd3338" stroke-width="2" d="M2398 390h82"/>
          <text x="2393" y="303" fill="#3333e0" class="axis">Z</text><text x="2487" y="397" fill="#e02a2f" class="axis">X</text>
          <text x="2440" y="354" class="face" text-anchor="middle">Front</text>
          <path fill="#ddd" stroke="#333" stroke-width="1.800" d="m2502 427 12 4-1 14-11 6-11-6-1-14z"/><path fill="#999" d="m2491 432 11 4v14l-10-6z"/><path fill="#fff" d="m2491 431 11-4 11 4-11 4z"/>
          <path fill="#333" d="M2526 437h10l-5 5z"/>
        </svg>

        <form class="dialog">
          <div class="dlghead"><h2>Sketch 1</h2><button type="button" class="ok" aria-label="Accept"><svg class="i24" viewBox="0 0 24 24"><path fill="none" stroke="#fff" stroke-width="4" d="m3 12 6 6L21 5"/></svg></button><button type="button" class="cancel" aria-label="Cancel"><svg class="i18" viewBox="0 0 18 18"><path stroke="#c0272d" stroke-width="4.500" d="m2 2 14 14M16 2 2 16"/></svg></button></div>
          <div class="dlgbody">
            <div class="planerow">
              <div class="planefield"><small>Sketch plane</small><div>Face of Top shock mount<svg class="i12" viewBox="0 0 12 12"><path stroke="#555" stroke-width="1.600" d="m1 1 10 10M11 1 1 11"/></svg></div></div>
              <svg class="i26" viewBox="0 0 26 26"><g fill="none" stroke="#333" stroke-width="1.800"><circle cx="13" cy="13" r="12"/><path fill="#ddd" d="M13 4a9 9 0 1 0 9 9h-9z"/></g></svg>
            </div>
            <label><input type="checkbox">Disable imprinting</label>
            <label><input type="checkbox" checked>Show constraints</label>
            <label><input type="checkbox">Show expressions</label>
            <label><input type="checkbox" checked>Show errors</label>
            <div class="dlgfoot">
              <button type="button" class="insp" aria-label="Inspect sketch"><svg class="i26" viewBox="0 0 26 26"><g fill="none" stroke="#333" stroke-width="1.800"><circle cx="13" cy="13" r="11.500"/><path d="m10 18 1-7 6-7 5 5-7 7z"/><path stroke-width="3" d="m21 20 4 5"/></g><path stroke="#1651b0" stroke-width="2" d="M4 20h18"/></svg></button>
              <button type="button" class="final">Final</button>
              <svg class="i18 grey"><use href="#question"/></svg>
            </div>
          </div>
        </form>

        <section class="banner">
          <div class="bannerrow"><span>Top shock mount</span><button>Go to assembly</button><button>Hide/show instances</button><button class="x" aria-label="Dismiss"><svg class="i14" viewBox="0 0 14 14"><path stroke="#8f6c10" stroke-width="1.800" d="m1 1 12 12M13 1 1 13"/></svg></button></div>
          <input type="range" min="0" max="1000" value="295" aria-label="Context transparency">
          <div class="toast" role="alert"><svg class="i22" viewBox="0 0 22 22"><path fill="#fbb703" stroke="#fbb703" stroke-width="2" stroke-linejoin="round" d="m11 2 10 18H1z"/><path stroke="#fff" stroke-width="2.400" d="M11 8v6M11 16v2"/></svg><span>Sketch could not be solved.</span><button aria-label="Close"><svg class="i14" viewBox="0 0 14 14"><path stroke="#8f6508" stroke-width="2.800" d="m1 1 12 12M13 1 1 13"/></svg></button></div>
        </section>

        <button class="expander" aria-label="Collapse list"><svg class="i28" viewBox="0 0 28 28"><path fill="none" stroke="#333" stroke-width="1.800" d="m2 2 4 4 4-4M6 9v17M13 3h13M9 10h17M9 17h17M9 24h17"/></svg></button>

        <div class="sidetools">
          <button aria-label="Appearance"><svg class="i28" viewBox="0 0 28 28"><path fill="#555" d="M10 9 15 2l7 3-6 11z"/><path fill="#999" stroke="#444" d="m5 15 8-6 3 7zM16 16l8-9 3 4-4 6z"/><path fill="#fff" stroke="#444" stroke-width="1.400" d="M1 17h26v9H1zM10 17v9M19 17v9"/><circle cx="5" cy="22" r="1.500" fill="#444"/></svg></button>
          <button aria-label="Configurations"><svg class="i28" viewBox="0 0 28 28"><path fill="none" stroke="#333" stroke-width="1.700" d="m17 8 10 4v9l-10 5-10-5v-9zM7 12l10 4 10-4M17 16v10"/><path fill="#1651b0" d="M1 2h14v12H1z"/><path stroke="#fff" d="M1 6h14M1 10h14M6 2v12M10 2v12"/></svg></button>
          <button aria-label="Custom table"><svg class="i28" viewBox="0 0 28 28"><path fill="none" stroke="#333" stroke-width="1.700" d="m15 8 8 4v8l-8 5-8-5v-8zM7 12l8 4 8-4M3 10v5l-2 2 2 1v7h3M23 4h2v9l2 2-2 2v8h-2"/><path fill="#333" d="M1 1h14v10H1z"/><path stroke="#fff" d="M1 4h14M1 8h14M6 1v10M10 1v10"/></svg></button>
          <button aria-label="Variable table"><svg class="i28" viewBox="0 0 28 28"><path fill="none" stroke="#333" stroke-width="3" d="M4 7q-4 8 0 16M24 6q4 8 0 17M9 20q6 2 6-6t6-5M11 10q4-2 5 5t5 4"/><path fill="#333" d="M1 1h14v10H1z"/><path stroke="#fff" d="M1 4h14M1 8h14M6 1v10M10 1v10"/></svg></button>
        </div>
        <div class="measure">
          <button aria-label="Measure"><svg class="i24" viewBox="0 0 24 24"><g fill="none" stroke="#333" stroke-width="1.800"><ellipse cx="16" cy="8" rx="7" ry="4"/><ellipse cx="16" cy="8" rx="3" ry="1.500"/><path d="M9 8v5H1v6h18q4-1 4-5V8M4 16v3M8 16v3M12 16v3M16 16v3"/></g></svg></button>
          <button aria-label="Angle"><svg class="i28" viewBox="0 0 28 28"><g fill="none" stroke="#333" stroke-width="1.800"><path d="M1 22C1 0 27 0 27 22zM7 19q7-8 14 0z"/><path stroke-dasharray="1 2" d="M4 19q2-12 10-12t10 12"/></g></svg></button>
          <button aria-label="Mass properties"><svg class="i24" viewBox="0 0 24 24"><path fill="none" stroke="#333" stroke-width="2" d="M2 3h20M12 3v16M3 19h18M1 22h22M5 4 1 14h7zM19 4l-4 10h7z"/></svg></button>
        </div>
      </main>
    </div>

    <nav class="doctabs" aria-label="Document tabs">
      <button class="add" aria-label="Add tab"><svg class="i22" viewBox="0 0 22 22"><path stroke="#555" stroke-width="4" d="M11 1v20M1 11h20"/></svg></button>
      <a href="#"><svg class="i26" viewBox="0 0 26 26"><path fill="#fff" stroke="#444" stroke-width="1.500" d="M2 1h17l6 5v19H7l-5-4z"/><path fill="#888" stroke="#444" d="M2 1h12l4 4v13H7l-5-4z"/></svg>Main Assembly</a>
      <a href="#" class="on"><svg class="i26" viewBox="0 0 26 26"><path fill="#fff" stroke="#444" stroke-width="1.500" d="M2 8h6l4 3v14H5l-3-3zM13 2h7l4 3v20h-8l-3-3zM5 11v14M16 6v19"/></svg>Part Studio 1</a>
      <a href="#"><svg class="i26"><use href="#folder"/></svg>Part</a>
      <a href="#"><svg class="i26"><use href="#folder"/></svg>Assembly</a>
    </nav>
  </div>
</div>
</body>
</html>
```
FILE: styles.css
```css
* { box-sizing: border-box; }
body { margin: 0; height: 100vh; display: flex; flex-direction: column; overflow: hidden; background: #222227; color: #333; font: 18px/24px Roboto, "Noto Sans", sans-serif; padding-bottom: 2px; }
button { border: 0; background: none; padding: 0; margin: 0; font: inherit; color: inherit; display: flex; align-items: center; justify-content: center; }
a { color: inherit; text-decoration: none; }
h1, h2 { margin: 0; }
ul { list-style: none; margin: 0; padding: 0; }
em { font-style: normal; }
svg { display: block; flex: none; }
.sprite { position: absolute; width: 0; height: 0; }
.i12 { width: 12px; height: 12px; }
.i14 { width: 14px; height: 14px; }
.i18 { width: 18px; height: 18px; }
.i20 { width: 20px; height: 20px; }
.i22 { width: 22px; height: 22px; }
.i24 { width: 24px; height: 24px; }
.i26 { width: 26px; height: 26px; }
.i28 { width: 28px; height: 28px; }
.i32 { width: 32px; height: 32px; }
.dark { color: #333; }
.grey { color: #999; }

/* browser frame */
.browser { background: #1f1e24; color: #fff; font-family: "Open Sans", "Noto Sans", sans-serif; flex: none; }
.tabstrip { display: flex; align-items: center; height: 60px; padding-left: 4px; font-size: 17px; }
.btab { display: flex; align-items: center; gap: 12px; height: 48px; padding: 0 18px 0 20px; border-radius: 12px; color: #b4b3b8; }
.btab.on { background: #3b3a40; color: #fff; width: 364px; }
.btitle { width: 264px; overflow: hidden; white-space: nowrap; -webkit-mask-image: linear-gradient(90deg, #000 85%, transparent); mask-image: linear-gradient(90deg, #000 85%, transparent); }
.btab:not(.on) { padding-left: 24px; }
.btitle.wide { width: 298px; }
.newtab { width: 54px; height: 40px; border-left: 1px solid #45444b; }
.wincontrols { display: flex; margin-left: auto; }
.wincontrols button { width: 69px; height: 48px; }
.addressrow { display: flex; align-items: center; height: 62px; background: #3b3a40; border-bottom: 2px solid #2e2d33; border-radius: 12px 12px 0 0; }
.navbtns { display: flex; width: 404px; padding-left: 10px; }
.navbtns button { width: 45px; height: 40px; }
.bookmark { width: 48px; height: 40px; }
.urlbar { display: flex; align-items: center; flex: 1; height: 48px; margin-left: 10px; padding: 0 14px; background: #252429; border-radius: 10px; gap: 27px; }
.url { flex: 1; margin-left: -4px; font-size: 20px; color: #b9b8be; white-space: nowrap; }
.url b { font-weight: 400; color: #fff; }
.vsep { width: 1px; height: 24px; background: #77767c; margin: 0 -14px; }
.brave { position: relative; }
.brave em { position: absolute; left: 17px; top: -8px; width: 18px; height: 18px; border-radius: 9px; background: #5d5f6b; font-size: 12px; line-height: 18px; text-align: center; }
.exts { display: flex; align-items: center; justify-content: space-between; width: 277px; margin: 0 19px 0 180px; }
.exts .vsep { background: #222; margin: 0 3px; }

/* document header */
.dochead { display: flex; align-items: center; flex: none; height: 54px; padding: 0 5px 0 18px; background: #e9e9e9; }
.logo { width: 34px; height: 38px; }
.brand { margin-left: 12px; width: 134px; font: 29px/40px Inter, sans-serif; font-weight: 300; color: #66686b; padding-bottom: 6px; }
.burger { margin-right: 17px; }
.dochead h1 { font-size: 30px; line-height: 40px; font-weight: 700; color: #333; white-space: nowrap; width: 397px; }
.branch { font-size: 21px; color: #999; padding-top: 4px; width: 62px; }
.docstats { display: flex; align-items: center; gap: 15px; font-size: 18px; }
.docstats button { gap: 8px; }
.headright { display: flex; align-items: center; margin-left: auto; gap: 15px; }
.bell { position: relative; }
.bell em { position: absolute; left: 12px; top: -7px; width: 21px; height: 22px; border-radius: 4px; background: #1651b0; color: #fff; font-size: 16px; line-height: 22px; font-weight: 700; text-align: center; }
.share { width: 79px; height: 45px; margin-bottom: 6px; border-radius: 6px; background: #1651b0; color: #fff; font-size: 19px; font-weight: 500; }
.headright > .i14 { margin-left: -8px; }
.user { gap: 8px; font-size: 19px; }

/* application frame */
.app { display: flex; flex: 1; min-height: 0; }
.strip { display: flex; flex-direction: column; width: 54px; flex: none; background: #fafafa; border-right: 1px solid #d4d4d4; border-top: 1px solid #d4d4d4; }
.strip button { height: 47px; }
.strip .last { margin-top: auto; height: 36px; }
.studio { display: flex; flex-direction: column; flex: 1; min-width: 0; }
.toolbar { display: flex; align-items: center; height: 49px; flex: none; background: #fff; }
.toolbar button { width: 46px; height: 44px; flex: none; }
.toolbar svg { width: 26px; height: 26px; }
.toolbar .drop { width: 24px; padding-right: 2px; }
.toolbar .drop svg { width: 16px; height: 16px; }
.toolbar > i { width: 2px; height: 35px; margin: 0 2px; background: #d2d2d2; flex: none; }
.toolbar .searchtools { width: 215px; height: 42px; margin-left: 13px; border-radius: 4px; background: #eee; font-size: 19px; gap: 6px; padding-bottom: 1px; }
.keys { display: flex; }
kbd { border: 1px solid #aaa; border-radius: 2px; font: 16px/22px Roboto, "DejaVu Sans", sans-serif; padding: 0 5px; height: 24px; white-space: nowrap; }
kbd:first-child { padding: 0 2px; }
.work { display: flex; flex: 1; min-height: 0; background: #fff; }

/* feature tree */
.tree { display: flex; flex-direction: column; width: 278px; flex: none; background: #fff; border-right: 1px solid #ccc; border-top: 1px solid #ccc; border-bottom: 1px solid #ccc; }
.contexts { height: 109px; width: 270px; padding: 9px 0 0 6px; border-bottom: 1px solid #ccc; }
.heading { display: block; font-size: 19px; font-weight: 500; margin-bottom: 8px; }
.selwrap { position: relative; width: 208px; }
.selwrap svg { position: absolute; right: 7px; top: 13px; color: #bbb; }
select { appearance: none; width: 208px; height: 41px; border: 1px solid #ddd; border-radius: 5px; background: #fff; color: #aaa; opacity: 1; font: 18px/24px Roboto, sans-serif; padding: 0 24px; }
.filter { display: flex; align-items: center; gap: 14px; padding: 10px 0 0 11px; }
.filter input { width: 213px; height: 39px; border: 1px solid #999; border-radius: 4px; padding: 0 8px; font: italic 18px/24px Roboto, sans-serif; color: #333; }
.filter input::placeholder { color: #777; opacity: 1; }
.featurehead { display: flex; align-items: center; gap: 15px; height: 42px; padding-left: 9px; }
.featurehead h2 { font-size: 18px; line-height: 24px; font-weight: 700; width: 94px; white-space: nowrap; margin-right: -9px; }
.group { padding: 3px 0 0 31px; position: relative; line-height: 30px; }
.group > svg { position: absolute; left: 4px; top: 9px; color: #555; }
.group ul { margin: 1px 0 0 -19px; border-left: 1px solid #ccc; padding-left: 18px; }
.group ul li { display: flex; align-items: center; gap: 6px; height: 35px; }
.feat { display: flex; align-items: center; gap: 5px; width: 270px; height: 34px; padding-left: 8px; margin-top: 1px; }
.feat span { flex: 1; }
.flag { width: 28px; height: 20px; margin-right: 40px; }
.current { background: #b1def8; color: #b01f28; font-weight: 700; }
.dim { color: #999; font-style: italic; }
.dim .i22 { opacity: .6; }
.rollback { width: 256px; height: 9px; margin: 14px 0 0 8px; background: #b5b5b5; }
.parts { display: flex; align-items: flex-start; gap: 9px; width: 270px; height: 357px; margin-top: auto; padding: 6px 0 0 4px; border-top: 2px solid #d4d4d4; }
.parts svg { margin-top: 3px; color: #555; }

/* modelling area */
.canvas { position: relative; flex: 1; min-width: 0; overflow: hidden; background: #fff; }
.scene { position: absolute; inset: 0; width: 100%; height: 100%; }
.plane-label { font: 500 25px Roboto, sans-serif; }
.dim-label { font: 600 22px Inter, sans-serif; fill: #d8343a; }
.bg-blue { fill: #dceff9; }
.bg-red { fill: #d96d72; }
.ink { color: #333; }
.ink-white { color: #fff; }
.viewcube { position: absolute; right: 2px; top: 13px; width: 240px; height: 220px; }
.axis { font: 700 18px Roboto, sans-serif; }
.face { font: 18px Roboto, sans-serif; fill: #222; }
.dialog { position: absolute; left: 0; top: 4px; width: 297px; background: rgba(255, 255, 255, .93); box-shadow: 0 4px 18px rgba(0, 0, 0, .3); color: #555; }
.dlghead { display: flex; align-items: center; height: 38px; border-bottom: 1px solid #ccc; padding-left: 8px; }
.dlghead h2 { flex: 1; font-size: 18px; font-weight: 700; color: #b01f28; }
.ok { width: 38px; height: 37px; background: #098c09; }
.cancel { width: 38px; }
.dlgbody { padding: 7px 4px 2px; }
.planerow { display: flex; align-items: flex-start; gap: 4px; margin-bottom: 6px; }
.planerow > svg { margin-top: 4px; }
.planefield { width: 255px; height: 60px; border: 1px solid #ccc; border-radius: 3px; padding: 4px 8px; }
.planefield small { display: block; font-size: 16px; }
.planefield div { display: flex; align-items: center; justify-content: space-between; padding-right: 7px; height: 28px; white-space: nowrap; }
.dlgbody label { display: flex; align-items: center; gap: 5px; height: 37px; }
.dlgbody input { appearance: none; width: 17px; height: 17px; margin: 0 0 0 1px; border: 1px solid #777; border-radius: 4px; background: #fff; }
.dlgbody input:checked { border-color: #1651b0; background: #1651b0; }
.dlgbody input:checked::after { content: ""; display: block; width: 5px; height: 9px; margin: 1px 0 0 5px; border: solid #fff; border-width: 0 3px 3px 0; transform: rotate(45deg); }
.dlgfoot { display: flex; align-items: center; justify-content: flex-end; gap: 7px; height: 35px; }
.insp, .final { height: 31px; border: 1px solid #999; border-radius: 4px; background: #fff; color: #333; }
.insp { width: 29px; }
.final { width: 66px; }
.dlgfoot > svg { margin: 6px 2px 0 4px; }
.banner { position: absolute; left: 731px; top: 0; width: 766px; height: 78px; background: #fbb703; padding: 4px 14px; font-size: 17px; }
.bannerrow { display: flex; align-items: center; gap: 15px; }
.bannerrow span { flex: 1; }
.bannerrow button { height: 30px; padding: 0 13px; border: 1px solid #aaa; border-radius: 4px; background: #fff; font-size: 17px; }
.bannerrow .x { background: none; border: 0; padding: 0 3px; }
.banner input { appearance: none; display: block; width: 736px; height: 16px; margin: 17px 0 0; background: linear-gradient(#777, #777) center / 100% 3px no-repeat; }
.banner input::-webkit-slider-thumb { appearance: none; width: 16px; height: 16px; border-radius: 8px; border: 1px solid #888; background: #fff; }
.toast { position: absolute; left: 50px; top: 11px; display: flex; align-items: center; width: 335px; height: 39px; padding: 0 7px 0 15px; gap: 15px; border: 1px solid #f8d98a; border-radius: 6px; background: #fff7e4; font-size: 18px; }
.toast span { flex: 1; }
.expander { position: absolute; left: 0; top: 632px; width: 43px; height: 46px; border: 1px solid #999; border-left: 0; background: #fff; }
.sidetools { position: absolute; right: 0; top: 565px; width: 44px; border: 1px solid #aaa; border-right: 0; background: #fff; }
.sidetools button { width: 43px; height: 44px; }
.sidetools button + button { border-top: 1px solid #aaa; height: 45px; }
.measure { position: absolute; right: 0; bottom: 0; display: flex; align-items: center; justify-content: space-between; width: 149px; height: 40px; padding: 0 15px; background: rgba(250, 250, 250, .9); }

/* document tabs */
.doctabs { display: flex; height: 40px; flex: none; background: #d5d5d5; gap: 3px; padding-bottom: 2px; }
.doctabs a { display: flex; align-items: center; gap: 4px; width: 270px; padding: 0 13px; background: #e9e9e9; color: #555; border-radius: 0 0 6px 6px; font-size: 19px; border-right: 1px solid #bbb; border-bottom: 1px solid #bbb; }
.doctabs a.on { background: #fff; color: #333; border-bottom: 3px solid #1651b0; }
.add { width: 49px; }
```
